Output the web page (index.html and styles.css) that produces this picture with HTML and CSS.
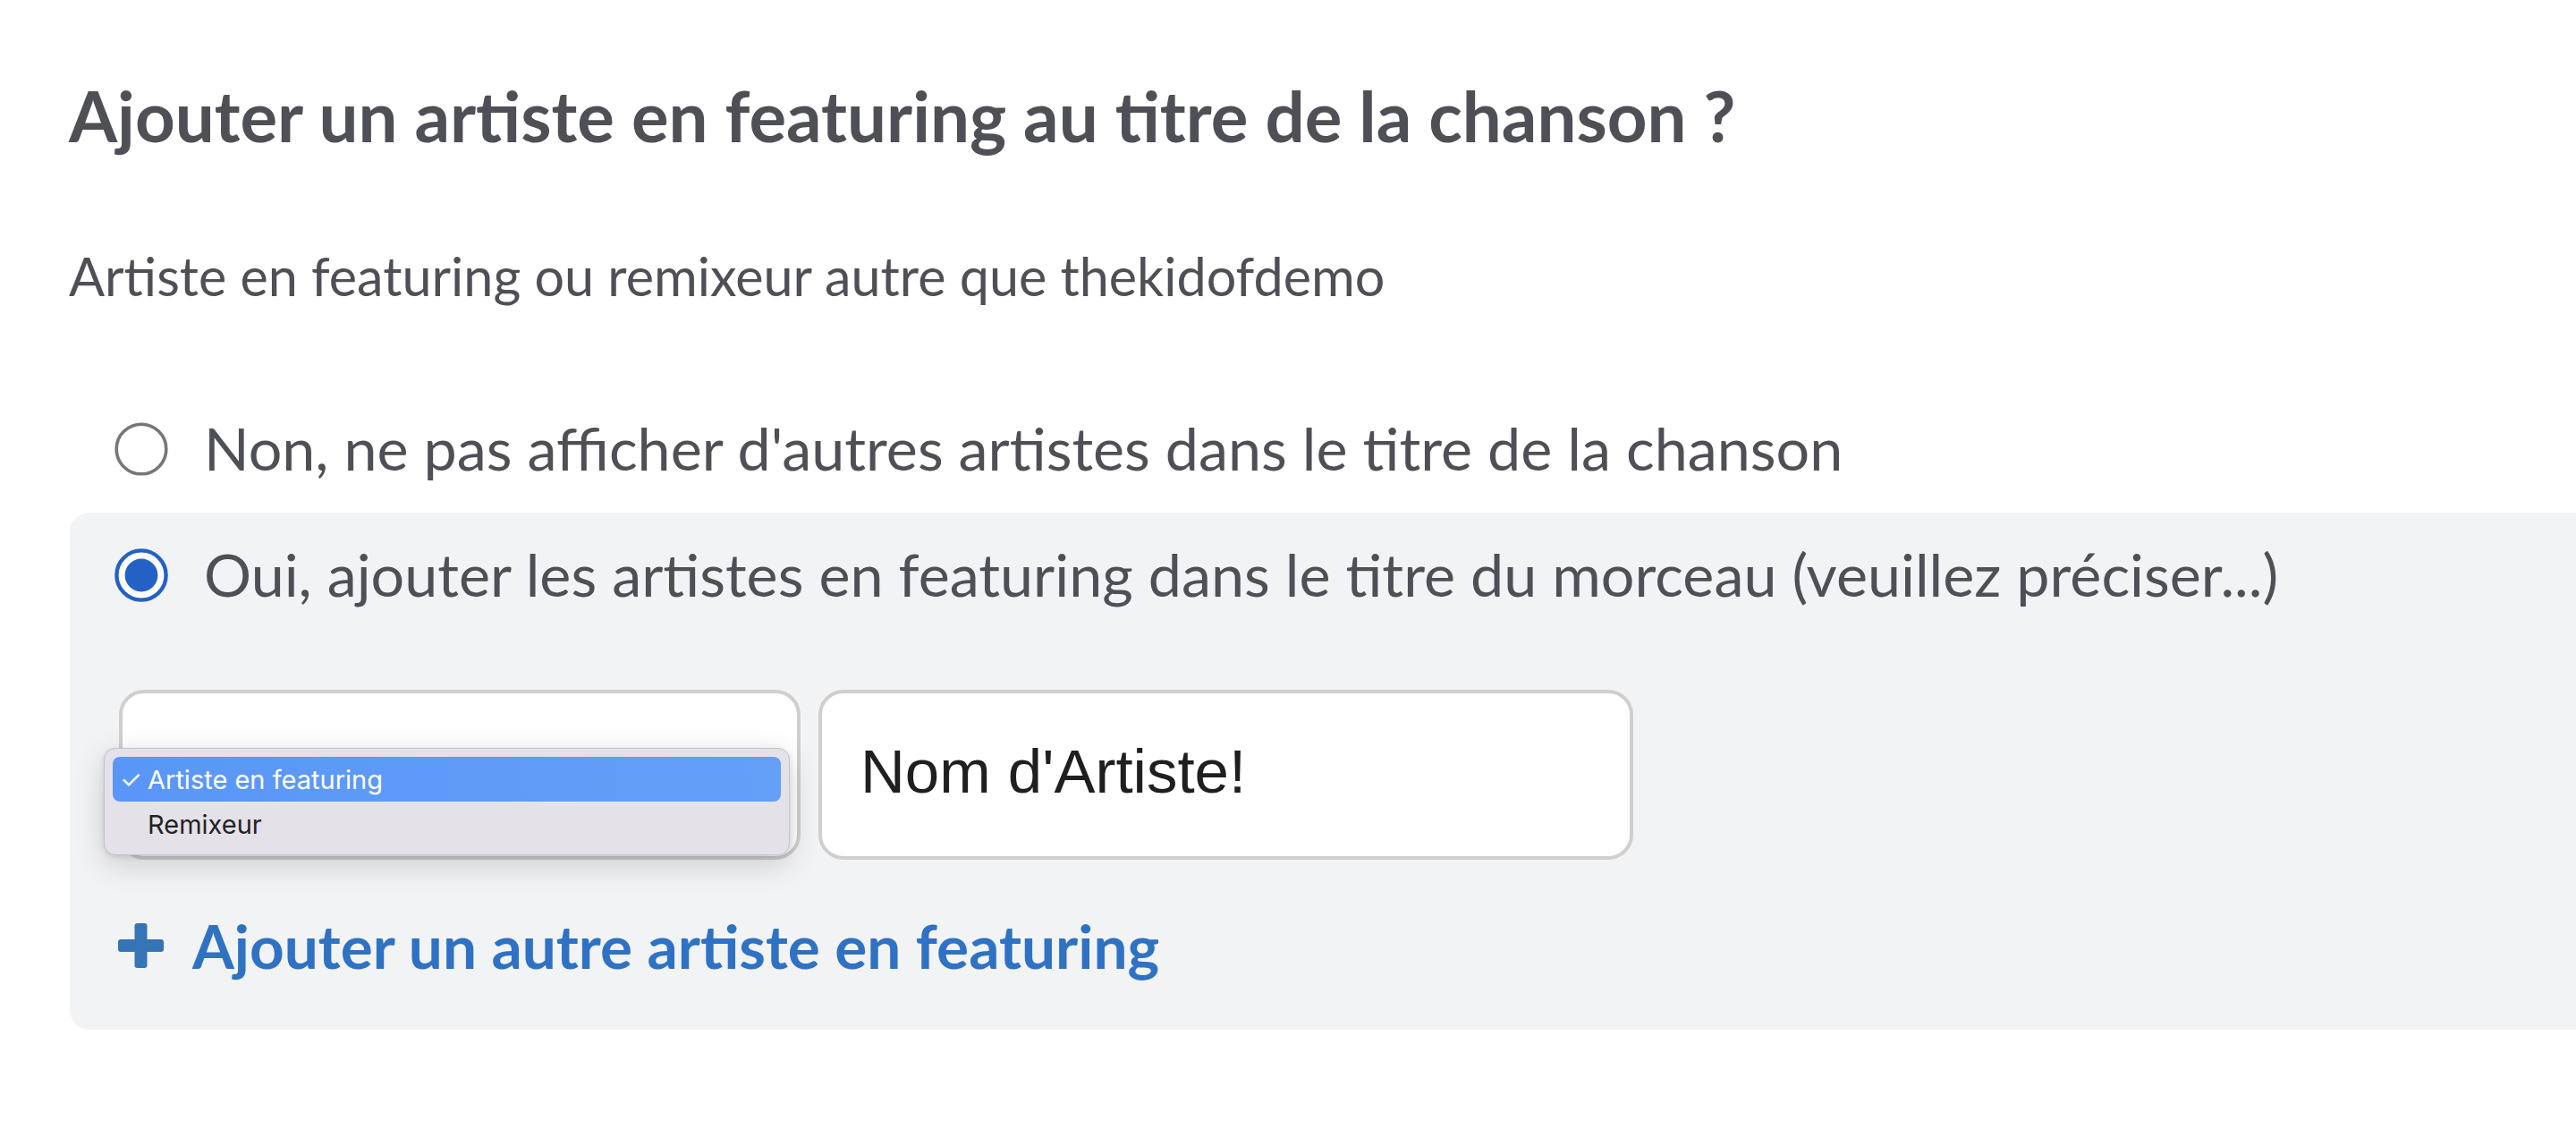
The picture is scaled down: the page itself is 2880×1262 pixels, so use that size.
FILE: index.html
```html
<!DOCTYPE html>
<html lang="fr">
<head>
<meta charset="utf-8">
<title>Featuring</title>
<link rel="stylesheet" href="styles.css">
</head>
<body>
<main class="page">
  <h1 class="title">Ajouter un artiste en featuring au titre de la chanson ?</h1>
  <p class="subtitle">Artiste en featuring ou remixeur autre que thekidofdemo</p>

  <div class="option">
    <svg class="radio" viewBox="0 0 60 60" width="60" height="60" aria-hidden="true">
      <circle cx="30" cy="30" r="27.8" fill="#fff" stroke="#767676" stroke-width="3.6"/>
    </svg>
    <span class="option-label">Non, ne pas afficher d'autres artistes dans le titre de la chanson</span>
  </div>

  <section class="panel">
    <div class="option">
      <svg class="radio" viewBox="0 0 60 60" width="60" height="60" aria-hidden="true">
        <circle cx="30" cy="30" r="27.6" fill="#fff" stroke="#2361c5" stroke-width="4.4"/>
        <circle cx="30" cy="30" r="18.4" fill="#2361c5"/>
      </svg>
      <span class="option-label">Oui, ajouter les artistes en featuring dans le titre du morceau (veuillez préciser...)</span>
    </div>

    <div class="fields">
      <div class="select-box">
        <div class="menu">
          <div class="menu-item selected"><span class="check">✓</span>Artiste en featuring</div>
          <div class="menu-item"><span class="check"></span>Remixeur</div>
        </div>
      </div>
      <div class="text-box">Nom d'Artiste!</div>
    </div>

    <a class="add-link" href="#">
      <svg class="plus" viewBox="0 0 51 50" width="51" height="50" aria-hidden="true">
        <rect x="18.5" y="0" width="14" height="50" rx="3" fill="#3575b5"/>
        <rect x="0" y="18" width="51" height="14" rx="3" fill="#3575b5"/>
      </svg>
      <span>Ajouter un autre artiste en featuring</span>
    </a>
  </section>
</main>
</body>
</html>
```
FILE: styles.css
```css
html, body {
  margin: 0;
  padding: 0;
  background: #ffffff;
}

body {
  font-family: "Lato", "Noto Sans", sans-serif;
  color: #4f5056;
  overflow: hidden;
}

.page {
  padding-top: 81px;
  padding-left: 77px;
}

.title {
  margin: 0;
  font-size: 78px;
  line-height: 96px;
  font-weight: 700;
  color: #4f5056;
}

.subtitle {
  margin: 95px 0 0 0;
  font-size: 59.3px;
  line-height: 72px;
  font-weight: 400;
}

.option {
  display: flex;
  align-items: center;
  gap: 40px;
  padding-left: 50px;
  height: 82px;
}

.page > .option {
  margin-top: 115px;
  margin-left: 1px;
}

.radio {
  flex: none;
  margin-top: 3px;
}

.option-label {
  font-size: 66.4px;
  line-height: 82px;
  white-space: nowrap;
}

.panel {
  margin-top: 32px;
  margin-left: 1px;
  margin-right: 0;
  background: #f2f3f5;
  border-radius: 22px 0 0 22px;
  padding: 27px 0 53px 0;
}

.fields {
  display: flex;
  gap: 20px;
  margin-top: 89px;
  padding-left: 55px;
}

.select-box {
  position: relative;
  box-sizing: border-box;
  width: 762px;
  height: 190px;
  border: 4px solid #cfcfcf;
  border-radius: 28px;
  background: #ffffff;
}

.text-box {
  box-sizing: border-box;
  width: 911px;
  height: 190px;
  border: 4px solid #cfcfcf;
  border-radius: 28px;
  background: #ffffff;
  font-family: "Liberation Sans", Arial, sans-serif;
  font-size: 69px;
  color: #1f1f1f;
  display: flex;
  align-items: center;
  padding-left: 43px;
  padding-bottom: 8px;
}

.menu {
  position: absolute;
  left: -21px;
  top: 61px;
  width: 767px;
  box-sizing: border-box;
  padding: 9px;
  background: #e4e1e8;
  border: 1px solid #c6c4ca;
  border-radius: 13px;
  box-shadow: 0 10px 34px rgba(0, 0, 0, 0.16), 0 2px 6px rgba(0, 0, 0, 0.10);
  font-family: "Inter", "Noto Sans", sans-serif;
  font-size: 29px;
  color: #232323;
}

.menu-item {
  height: 50px;
  display: flex;
  align-items: center;
  border-radius: 8px;
  padding-left: 8px;
}

.menu-item.selected {
  background: linear-gradient(90deg, #5a96f7 0%, #649ff8 100%);
  color: #ffffff;
}

.check {
  display: inline-block;
  width: 31px;
  font-size: 28px;
}

.add-link {
  display: flex;
  align-items: center;
  gap: 32px;
  margin-top: 55px;
  padding-left: 54px;
  height: 82px;
  text-decoration: none;
  color: #2f72c3;
  font-size: 67.5px;
  font-weight: 700;
  line-height: 82px;
  white-space: nowrap;
}

.plus {
  flex: none;
}
```
